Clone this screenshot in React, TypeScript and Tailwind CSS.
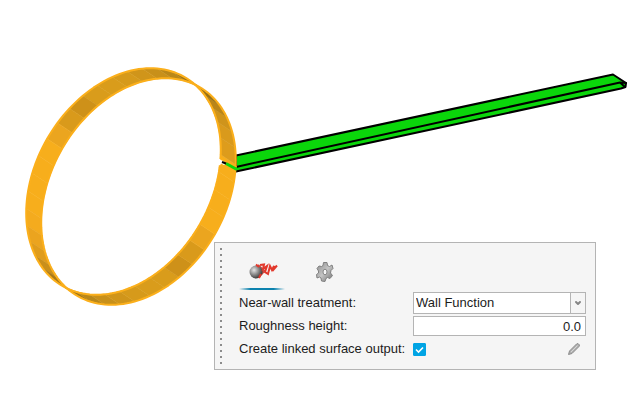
import { useState } from 'react'
import { ChevronDown } from 'lucide-react'

const HALF_SHADES = [
  '#a07414', '#b98719', '#c8901a', '#d0951a', '#d69a1b', '#d99c1b', '#d99c1b', '#ce9119', '#d99a1b', '#eba51f',
  '#f7ae1c', '#f7ae1c', '#f7ae1c', '#f7ae1c', '#f4ab1e', '#eba41f', '#df9c1c', '#c98f1a', '#a87816', '#8a6212',
]
const SHADES = [
  ...HALF_SHADES,
  ...HALF_SHADES.slice(0, 14),
  '#dd9c1c', '#d99a1c', '#cf941b', '#b98519', '#987014', '#855f10',
]

const TILT = (59.4 * Math.PI) / 180
const STEP = 360 / SHADES.length
const GAP_FACET = 34
const DEPTH = { x: 15, y: 10 }

const rimPoint = (index: number) => {
  const t = (-(index * STEP + 1) * Math.PI) / 180
  const a = 121 * Math.cos(t)
  const b = 87.5 * Math.sin(t)
  return {
    x: 123.5 + a * Math.cos(TILT) + b * Math.sin(TILT),
    y: 181.5 - a * Math.sin(TILT) + b * Math.cos(TILT),
  }
}

const facets = SHADES.map((shade, i) => {
  const p = rimPoint(i)
  const q = rimPoint(i + 1)
  const points = [
    [p.x, p.y],
    [q.x, q.y],
    [q.x + DEPTH.x, q.y + DEPTH.y],
    [p.x + DEPTH.x, p.y + DEPTH.y],
  ]
  return { shade, points: points.map((v) => v.join(',')).join(' ') }
})

const rimLine = (dx: number, dy: number) =>
  Array.from({ length: SHADES.length * 4 + 1 }, (_, i) => {
    const p = rimPoint(GAP_FACET + i / 4)
    return `${p.x + dx},${p.y + dy}`
  }).join(' ')

const Beam = () => (
  <g stroke="#000" strokeWidth="2" strokeLinejoin="round" strokeLinecap="round">
    <path d="M236 155.500 613 74.500 626 83 625.500 87 621 88.500 236 171.500Z" fill="#0bd60b" />
    <path d="M236 167 620 82.500 626 83M620 82.500 625 87" fill="none" />
  </g>
)

const Ring = () => (
  <g>
    {facets.map((facet, i) => (
      <polygon key={i} points={facet.points} fill={facet.shade} stroke={facet.shade} strokeWidth="0.5" />
    ))}
    <g fill="none" stroke="#fbaf1b" strokeWidth="2" strokeLinejoin="round">
      <polyline points={rimLine(0, 0)} />
      <polyline points={rimLine(DEPTH.x, DEPTH.y)} />
    </g>
    <path d="M217 159 221 159 226 162 224 165.500 217 165Z" fill="#fff" />
    <path d="M220.500 158.500 236.500 167" stroke="#fbaf1b" strokeWidth="2" />
    <path d="M220.500 164.500 235.500 172.500" stroke="#fbaf1b" strokeWidth="2" />
    <path d="M226 163.500 237 169.500" stroke="#0bd60b" strokeWidth="3" />
    <path d="M222 162 226 163.500" stroke="#000" strokeWidth="2" />
  </g>
)

const WallIcon = () => (
  <svg className="h-6 w-8" viewBox="0 0 32 24" aria-hidden="true">
    <defs>
      <radialGradient id="ball" cx="0.35" cy="0.35" r="0.7">
        <stop offset="0" stopColor="#e4e4e4" />
        <stop offset="0.5" stopColor="#8b8b8b" />
        <stop offset="1" stopColor="#333" />
      </radialGradient>
    </defs>
    <path d="M12 5 15 8 13 11 17 9 15 15 19 10" fill="none" stroke="#cf4a40" strokeWidth="2" />
    <circle cx="10" cy="12" r="6.500" fill="url(#ball)" />
    <path d="M10 4.500 13 7M13 18 15 14M14 5 18 4.500 17 9 21 6 19 12 22 14 24 6 26 10 28 6 28 9 31 5.500" fill="none" stroke="#e2382c" strokeWidth="2" />
  </svg>
)

const GearIcon = () => (
  <svg className="h-6 w-6" viewBox="0 0 24 24" aria-hidden="true">
    <defs>
      <linearGradient id="steel" x1="0" y1="0" x2="1" y2="1">
        <stop offset="0" stopColor="#8a8a8a" />
        <stop offset="0.5" stopColor="#c4c4c4" />
        <stop offset="1" stopColor="#6d6d6d" />
      </linearGradient>
    </defs>
    <path
      d="M11.500 2.500 15 2.500 15.500 5.500 17.500 6.500 20 5 21 8.500 19 10.500 18.500 13 20.500 15.500 18 18.500 15.500 17.500 14 18.500 13 21.500 9.500 21 9 18 7.500 17 5 18 4.500 14.500 6.500 13 6.500 11 5 8.500 7 6 9.500 6.500 11 5.500Z"
      fill="url(#steel)"
      stroke="#808080"
      strokeWidth="1"
      strokeLinejoin="round"
    />
    <ellipse cx="13" cy="12" rx="2" ry="2.800" fill="#f5f5f5" stroke="#858585" strokeWidth="1" />
  </svg>
)

const PencilIcon = () => (
  <svg className="h-3 w-3" viewBox="0 0 12 12" aria-hidden="true">
    <path d="M.5 11.500 1.500 8 8.500 1 10 .5 11.500 2 11 3.500 4 10.500Z" fill="#b0b0b0" stroke="#8c8c8c" strokeWidth="1" />
    <path d="M3 9 9.500 2.500" stroke="#d6d6d6" strokeWidth="1" />
  </svg>
)

const WallPanel = () => {
  const [treatment, setTreatment] = useState('Wall Function')
  const [height, setHeight] = useState('0.0')
  const [linked, setLinked] = useState(true)

  return (
    <form className="absolute left-[214px] top-[242px] flex border border-[#b4b4b4] bg-[#f5f5f5] pb-1 pt-[5px] pl-[5px] pr-[9px] text-[13px] leading-4 text-[#1c1c1c]">
      <svg className="h-[117px] w-[3px]" aria-hidden="true">
        <path d="M1 0V117" stroke="#8c8c8c" strokeWidth="2" strokeDasharray="2 4" />
      </svg>
      <div className="ml-4">
        <div className="flex gap-4 pb-[2px]">
          <button type="button" aria-label="Wall" className="flex w-[46px] flex-col items-center pt-3">
            <WallIcon />
            <span className="mt-1 h-[2px] w-full bg-[linear-gradient(to_right,transparent,#0c82ae_25%,#0c82ae_75%,transparent)]" />
          </button>
          <button type="button" aria-label="Settings" className="flex w-[46px] flex-col items-center pt-3">
            <GearIcon />
          </button>
        </div>
        <div className="grid grid-cols-[174px_173px] items-center gap-y-0.5">
          <label htmlFor="treatment">Near-wall treatment:</label>
          <div className="relative">
            <select
              id="treatment"
              value={treatment}
              onChange={(e) => setTreatment(e.target.value)}
              className="block h-[22px] w-full appearance-none border border-[#b4b4b4] bg-white pl-[2px]"
            >
              <option>Wall Function</option>
              <option>Full Resolution</option>
            </select>
            <span className="pointer-events-none absolute inset-y-0 right-0 flex w-4 items-center justify-center border border-[#b4b4b4] bg-[#f5f5f5]">
              <ChevronDown className="h-2 w-2 text-[#858585]" strokeWidth={6} />
            </span>
          </div>
          <label htmlFor="roughness">Roughness height:</label>
          <input
            id="roughness"
            value={height}
            onChange={(e) => setHeight(e.target.value)}
            className="block h-5 w-full border border-[#b4b4b4] bg-white pr-1 text-right"
          />
          <label htmlFor="linked">Create linked surface output:</label>
          <div className="flex h-[22px] items-center justify-between pr-[6px]">
            <span className="relative flex">
              <input
                id="linked"
                type="checkbox"
                checked={linked}
                onChange={(e) => setLinked(e.target.checked)}
                className="peer h-[13px] w-[13px] appearance-none rounded-[1px] border border-[#b4b4b4] bg-white checked:border-[#00a4e4] checked:bg-[#00a4e4]"
              />
              <svg className="pointer-events-none absolute inset-0 hidden peer-checked:block" viewBox="0 0 13 13" aria-hidden="true">
                <path d="M3 6.500 5.500 9 10 4.500" fill="none" stroke="#fff" strokeWidth="1.600" />
              </svg>
            </span>
            <button type="button" aria-label="Edit">
              <PencilIcon />
            </button>
          </div>
        </div>
      </div>
    </form>
  )
}

const App = () => (
  <main className="relative min-h-screen bg-white font-['Liberation_Sans',Arial,sans-serif]">
    <svg className="block w-full" viewBox="0 0 641 405" role="img" aria-label="Ring and beam model">
      <Beam />
      <Ring />
    </svg>
    <WallPanel />
  </main>
)

export default App
